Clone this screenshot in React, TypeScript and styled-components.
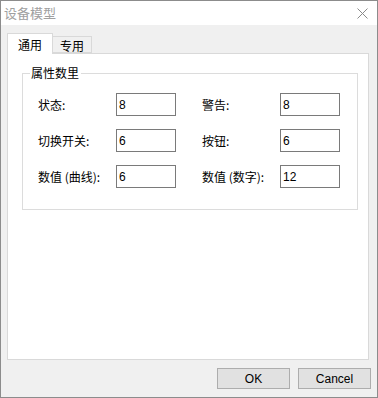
import React from "react";
import styled, { createGlobalStyle } from "styled-components";

const Global = createGlobalStyle`
  html, body { margin: 0; padding: 0; background: #ffffff; }
  * { box-sizing: border-box; }
`;

const FONT = `"Liberation Sans", "Noto Sans CJK SC", sans-serif`;

const Window = styled.div`
  width: 378px;
  height: 398px;
  border: 1px solid #8c8c8c;
  display: flex;
  flex-direction: column;
  font-family: ${FONT};
  font-size: 12px;
  color: #000;
`;

const TitleBar = styled.div`
  height: 24px;
  background: #ffffff;
  display: flex;
  align-items: center;
  justify-content: space-between;
  padding: 0 9px 0 3px;
  flex-shrink: 0;
`;

const Title = styled.div`
  font-family: "Noto Sans CJK SC", sans-serif;
  font-size: 13px;
  color: #a0a0a0;
  line-height: 24px;
`;

const Body = styled.div`
  flex: 1;
  background: #f0f0f0;
  display: flex;
  flex-direction: column;
  padding: 8px 8px 8px 6px;
`;

const TabStrip = styled.div`
  display: flex;
  align-items: flex-end;
  height: 20px;
  position: relative;
  z-index: 1;
`;

const Tab = styled.div<{ $active?: boolean }>`
  font-family: "Noto Sans CJK SC", sans-serif;
  font-size: 12px;
  display: flex;
  align-items: center;
  justify-content: center;
  border: 1px solid #d9d9d9;
  border-bottom: ${(p) => (p.$active ? "none" : "1px solid #d9d9d9")};
  margin-left: ${(p) => (p.$active ? "0" : "-1px")};
  background: ${(p) => (p.$active ? "#ffffff" : "#f0f0f0")};
  width: ${(p) => (p.$active ? "46px" : "40px")};
  height: ${(p) => (p.$active ? "21px" : "17px")};
  margin-bottom: ${(p) => (p.$active ? "-1px" : "0")};
  padding-top: ${(p) => (p.$active ? "0" : "1px")};
`;

const Panel = styled.div`
  flex: 1;
  background: #ffffff;
  border: 1px solid #d9d9d9;
  padding: 11px 10px 0 14px;
`;

const Group = styled.fieldset`
  margin: 0;
  width: 336px;
  height: 145px;
  border: 1px solid #dcdcdc;
  padding: 12px 0 0 15px;
  min-width: 0;
`;

const Legend = styled.legend`
  font-family: "Noto Sans CJK SC", sans-serif;
  font-size: 12px;
  padding: 0 2px 0 1px;
  margin-left: -8px;
  line-height: 16px;
`;

const Grid = styled.div`
  display: grid;
  grid-template-columns: 78px 86px 78px 60px;
  row-gap: 13px;
  align-items: center;
`;

const Label = styled.label`
  font-family: "Noto Sans CJK SC", sans-serif;
  font-size: 12px;
  white-space: nowrap;
`;

const Field = styled.div`
  height: 23px;
  width: 60px;
  border: 1px solid #7a7a7a;
  background: #fff;
  font-family: "Liberation Sans", sans-serif;
  font-size: 12px;
  padding: 4px 0 0 2px;
  line-height: 14px;
`;

const ButtonRow = styled.div`
  display: flex;
  justify-content: flex-end;
  gap: 8px;
  margin-top: 8px;
  margin-right: -2px;
`;

const Button = styled.button`
  width: 73px;
  height: 21px;
  border: 1px solid #adadad;
  background: #e1e1e1;
  font-family: ${FONT};
  font-size: 12px;
  color: #000;
  padding: 0;
`;

const Close = () => (
  <svg width="11" height="11" viewBox="0 0 11 11">
    <path d="M0.5 0.5 L10.5 10.5 M10.5 0.5 L0.5 10.5" stroke="#8a8a8a" strokeWidth="1" />
  </svg>
);

const rows: [string, string, string, string][] = [
  ["状态:", "8", "警告:", "8"],
  ["切换开关:", "6", "按钮:", "6"],
  ["数值 (曲线):", "6", "数值 (数字):", "12"],
];

export default function App() {
  return (
    <>
      <Global />
      <Window>
        <TitleBar>
          <Title>设备模型</Title>
          <Close />
        </TitleBar>
        <Body>
          <TabStrip>
            <Tab $active>通用</Tab>
            <Tab>专用</Tab>
          </TabStrip>
          <Panel>
            <Group>
              <Legend>属性数里</Legend>
              <Grid>
                {rows.map((r, i) => (
                  <React.Fragment key={i}>
                    <Label>{r[0]}</Label>
                    <Field>{r[1]}</Field>
                    <Label>{r[2]}</Label>
                    <Field>{r[3]}</Field>
                  </React.Fragment>
                ))}
              </Grid>
            </Group>
          </Panel>
          <ButtonRow>
            <Button>OK</Button>
            <Button>Cancel</Button>
          </ButtonRow>
        </Body>
      </Window>
    </>
  );
}
